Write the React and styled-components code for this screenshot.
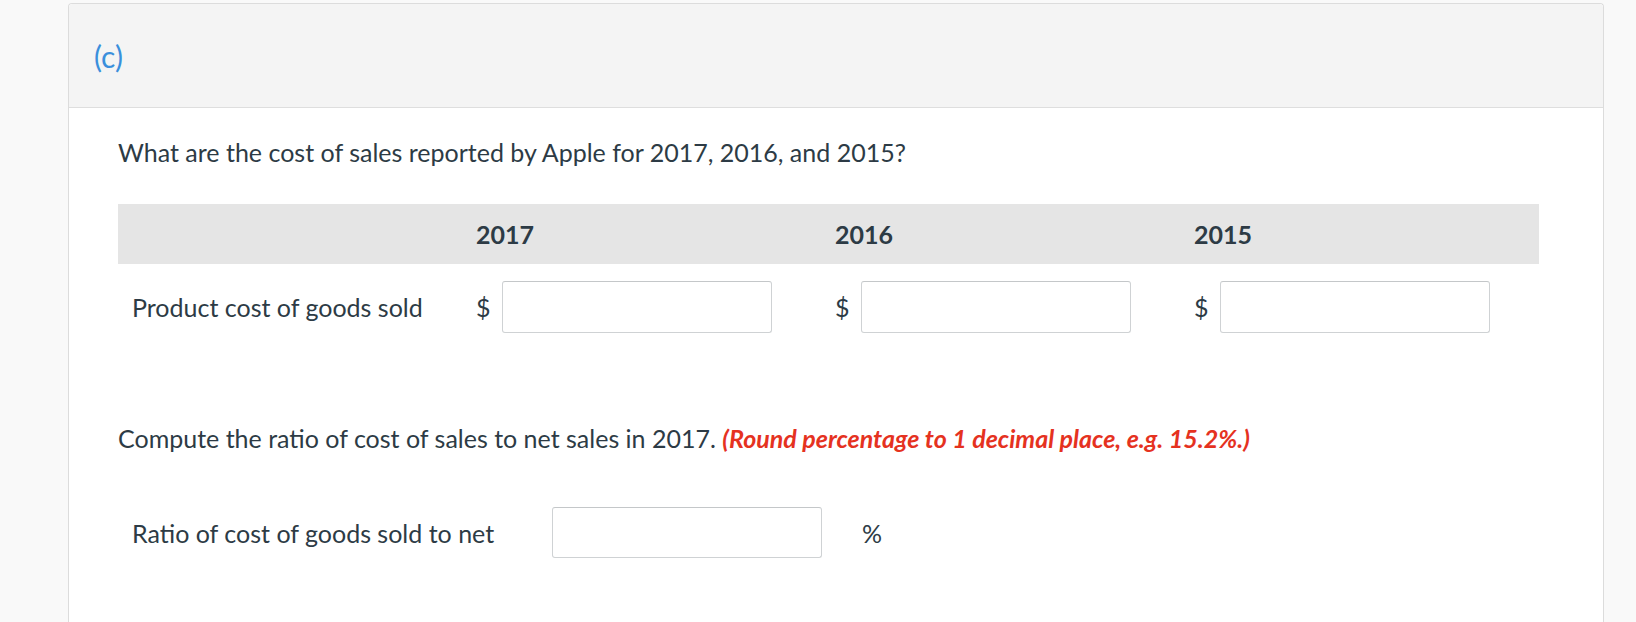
import styled, { createGlobalStyle } from "styled-components";

const GlobalStyle = createGlobalStyle`
  body {
    margin: 0;
    background-color: #f9f9f9;
    font-family: Lato, "Open Sans", sans-serif;
    color: #2d3b45;
  }
`;

const StyledPage = styled.div`
  padding: 3px 0 0 68px;
  height: 619px;
  overflow: hidden;
`;

const StyledCard = styled.div`
  width: 1534px;
  min-height: 640px;
  background-color: #ffffff;
  border: 1px solid #dcdcdc;
  border-bottom: none;
  border-radius: 4px 4px 0 0;
`;

const StyledHeader = styled.div`
  display: flex;
  align-items: center;
  height: 103px;
  padding-left: 25px;
  background-color: #f4f4f4;
  border-bottom: 1px solid #dedede;
  border-radius: 4px 4px 0 0;
  font-size: 30px;
  color: #3a8fdc;
`;

const StyledBody = styled.div`
  padding: 0 64px 0 49px;
`;

const StyledQuestion = styled.p`
  margin: ${(p) => p.$top}px 0 0;
  font-size: 25px;
  line-height: 34px;
`;

const StyledHint = styled.span`
  color: #e5321f;
  font-weight: 700;
  font-style: italic;
`;

const StyledGrid = styled.div`
  display: grid;
  grid-template-columns: 344px repeat(3, 1fr);
  align-items: center;
`;

const StyledHeadRow = styled(StyledGrid)`
  margin-top: 35px;
  height: 60px;
  background-color: #e5e5e5;
`;

const StyledHeadCell = styled.div`
  padding: 0 14px;
  font-size: 25px;
  font-weight: 700;
`;

const StyledRow = styled(StyledGrid)`
  margin-top: 17px;
`;

const StyledLabel = styled.div`
  padding: 0 14px;
  font-size: 25px;
`;

const StyledCell = styled.div`
  display: flex;
  align-items: center;
  gap: 11px;
  padding: 0 14px;
  font-size: 25px;
`;

const StyledInput = styled.input`
  box-sizing: border-box;
  width: 270px;
  height: ${(p) => p.$h}px;
  margin: 0;
  border: 1px solid #cfd2d4;
  border-top-color: #c4c7c9;
  border-radius: 3px;
  background-color: #ffffff;
  font-family: inherit;
  font-size: 22px;
  outline: 0;
`;

const StyledRatioRow = styled.div`
  display: flex;
  align-items: center;
  margin-top: 52px;
  padding-left: 14px;
`;

const StyledRatioLabel = styled.div`
  width: 420px;
  font-size: 25px;
`;

const StyledUnit = styled.span`
  margin-left: 40px;
  font-size: 25px;
`;

const years = ["2017", "2016", "2015"];

export default function App() {
  return (
    <>
      <GlobalStyle />
      <StyledPage>
        <StyledCard>
          <StyledHeader>(c)</StyledHeader>
          <StyledBody>
            <StyledQuestion $top={27}>
              What are the cost of sales reported by Apple for 2017, 2016, and 2015?
            </StyledQuestion>
            <StyledHeadRow>
              <div />
              {years.map((y) => (
                <StyledHeadCell key={y}>{y}</StyledHeadCell>
              ))}
            </StyledHeadRow>
            <StyledRow>
              <StyledLabel>Product cost of goods sold</StyledLabel>
              {years.map((y) => (
                <StyledCell key={y}>
                  $
                  <StyledInput type="text" $h={52} />
                </StyledCell>
              ))}
            </StyledRow>
            <StyledQuestion $top={88}>
              Compute the ratio of cost of sales to net sales in 2017.{" "}
              <StyledHint>(Round percentage to 1 decimal place, e.g. 15.2%.)</StyledHint>
            </StyledQuestion>
            <StyledRatioRow>
              <StyledRatioLabel>Ratio of cost of goods sold to net</StyledRatioLabel>
              <StyledInput type="text" $h={51} />
              <StyledUnit>%</StyledUnit>
            </StyledRatioRow>
          </StyledBody>
        </StyledCard>
      </StyledPage>
    </>
  );
}
